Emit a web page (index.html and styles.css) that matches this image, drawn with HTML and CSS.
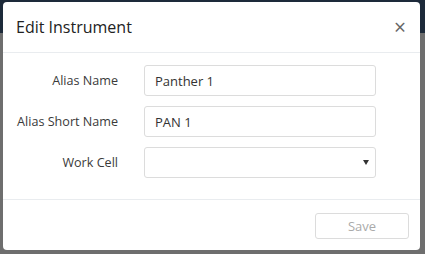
FILE: index.html
```html
<html>
   <head>
      <meta charset="UTF-8">
      <title>Edit Instrument</title>
      <link rel="stylesheet" href="styles.css">
   </head>
   <body>
      <div class="backdrop">
         <div class="backdrop__bar"></div>
         <div class="modal">
            <div class="modal__header">
               <h4 class="modal__title">Edit Instrument</h4>
               <span class="modal__close">&times;</span>
            </div>
            <div class="modal__body">
               <div class="form__row">
                  <label class="form__label">Alias Name</label>
                  <input class="form__input" type="text" value="Panther 1">
               </div>
               <div class="form__row">
                  <label class="form__label">Alias Short Name</label>
                  <input class="form__input" type="text" value="PAN 1">
               </div>
               <div class="form__row">
                  <label class="form__label">Work Cell</label>
                  <div class="form__select">
                     <span class="select__arrow"></span>
                  </div>
               </div>
            </div>
            <div class="modal__footer">
               <button class="btn__save" disabled>Save</button>
            </div>
         </div>
      </div>
   </body>
</html>
```

FILE: styles.css
```css
* {
  box-sizing: border-box;
}
body {
    margin: 0;
    font-family: "Open Sans", sans-serif;
    color: #333;
}
/* dark page behind the dialog */
.backdrop {
    position: relative;
    width: 425px;
    height: 254px;
    background-color: #6e6e6e;
    padding: 2px 5px 4px 3px;
    overflow: hidden;
}
.backdrop__bar {
    position: absolute;
    left: 0;
    top: 0;
    width: 100%;
    height: 33px;
    background-color: #1d2a3a;
}
.modal {
    position: relative;
    height: 100%;
    background: #fff;
    border-radius: 4px;
    display: flex;
    flex-direction: column;
}
.modal__header {
    display: flex;
    align-items: center;
    justify-content: space-between;
    height: 51px;
    padding: 0 14px 0 13px;
    border-bottom: 1px solid #e9ecef;
}
.modal__title {
    margin: 0;
    font-size: 16px;
    font-weight: normal;
    color: #222;
}
.modal__close {
    font-size: 21px;
    color: #666;
    line-height: 1;
}
.modal__body {
    display: flex;
    flex-direction: column;
    gap: 10px;
    padding: 12px 0 0 0;
    height: 147px;
    border-bottom: 1px solid #e9ecef;
}
.form__row {
    display: flex;
    align-items: center;
}
.form__label {
    width: 115px;
    text-align: right;
    font-size: 12.6px;
    color: #3a3a3a;
    margin-right: 26px;
}
.form__input,
.form__select {
    width: 232px;
    height: 31px;
    border: 1px solid #dcdcdc;
    border-radius: 3px;
    padding: 0 10px;
    font-family: "Open Sans", sans-serif;
    font-size: 13px;
    color: #333;
    outline: none;
}
.form__select {
    display: flex;
    align-items: center;
    justify-content: flex-end;
    padding-right: 6px;
}
.select__arrow {
    width: 0;
    height: 0;
    border-left: 3px solid transparent;
    border-right: 3px solid transparent;
    border-top: 5px solid #333;
}
.modal__footer {
    display: flex;
    justify-content: flex-end;
    padding: 13px 11px 0 0;
}
.btn__save {
    width: 94px;
    height: 26px;
    background: #fff;
    border: 1px solid #dcdcdc;
    border-radius: 3px;
    font-family: "Open Sans", sans-serif;
    font-size: 13px;
    color: #aaa;
}
```
